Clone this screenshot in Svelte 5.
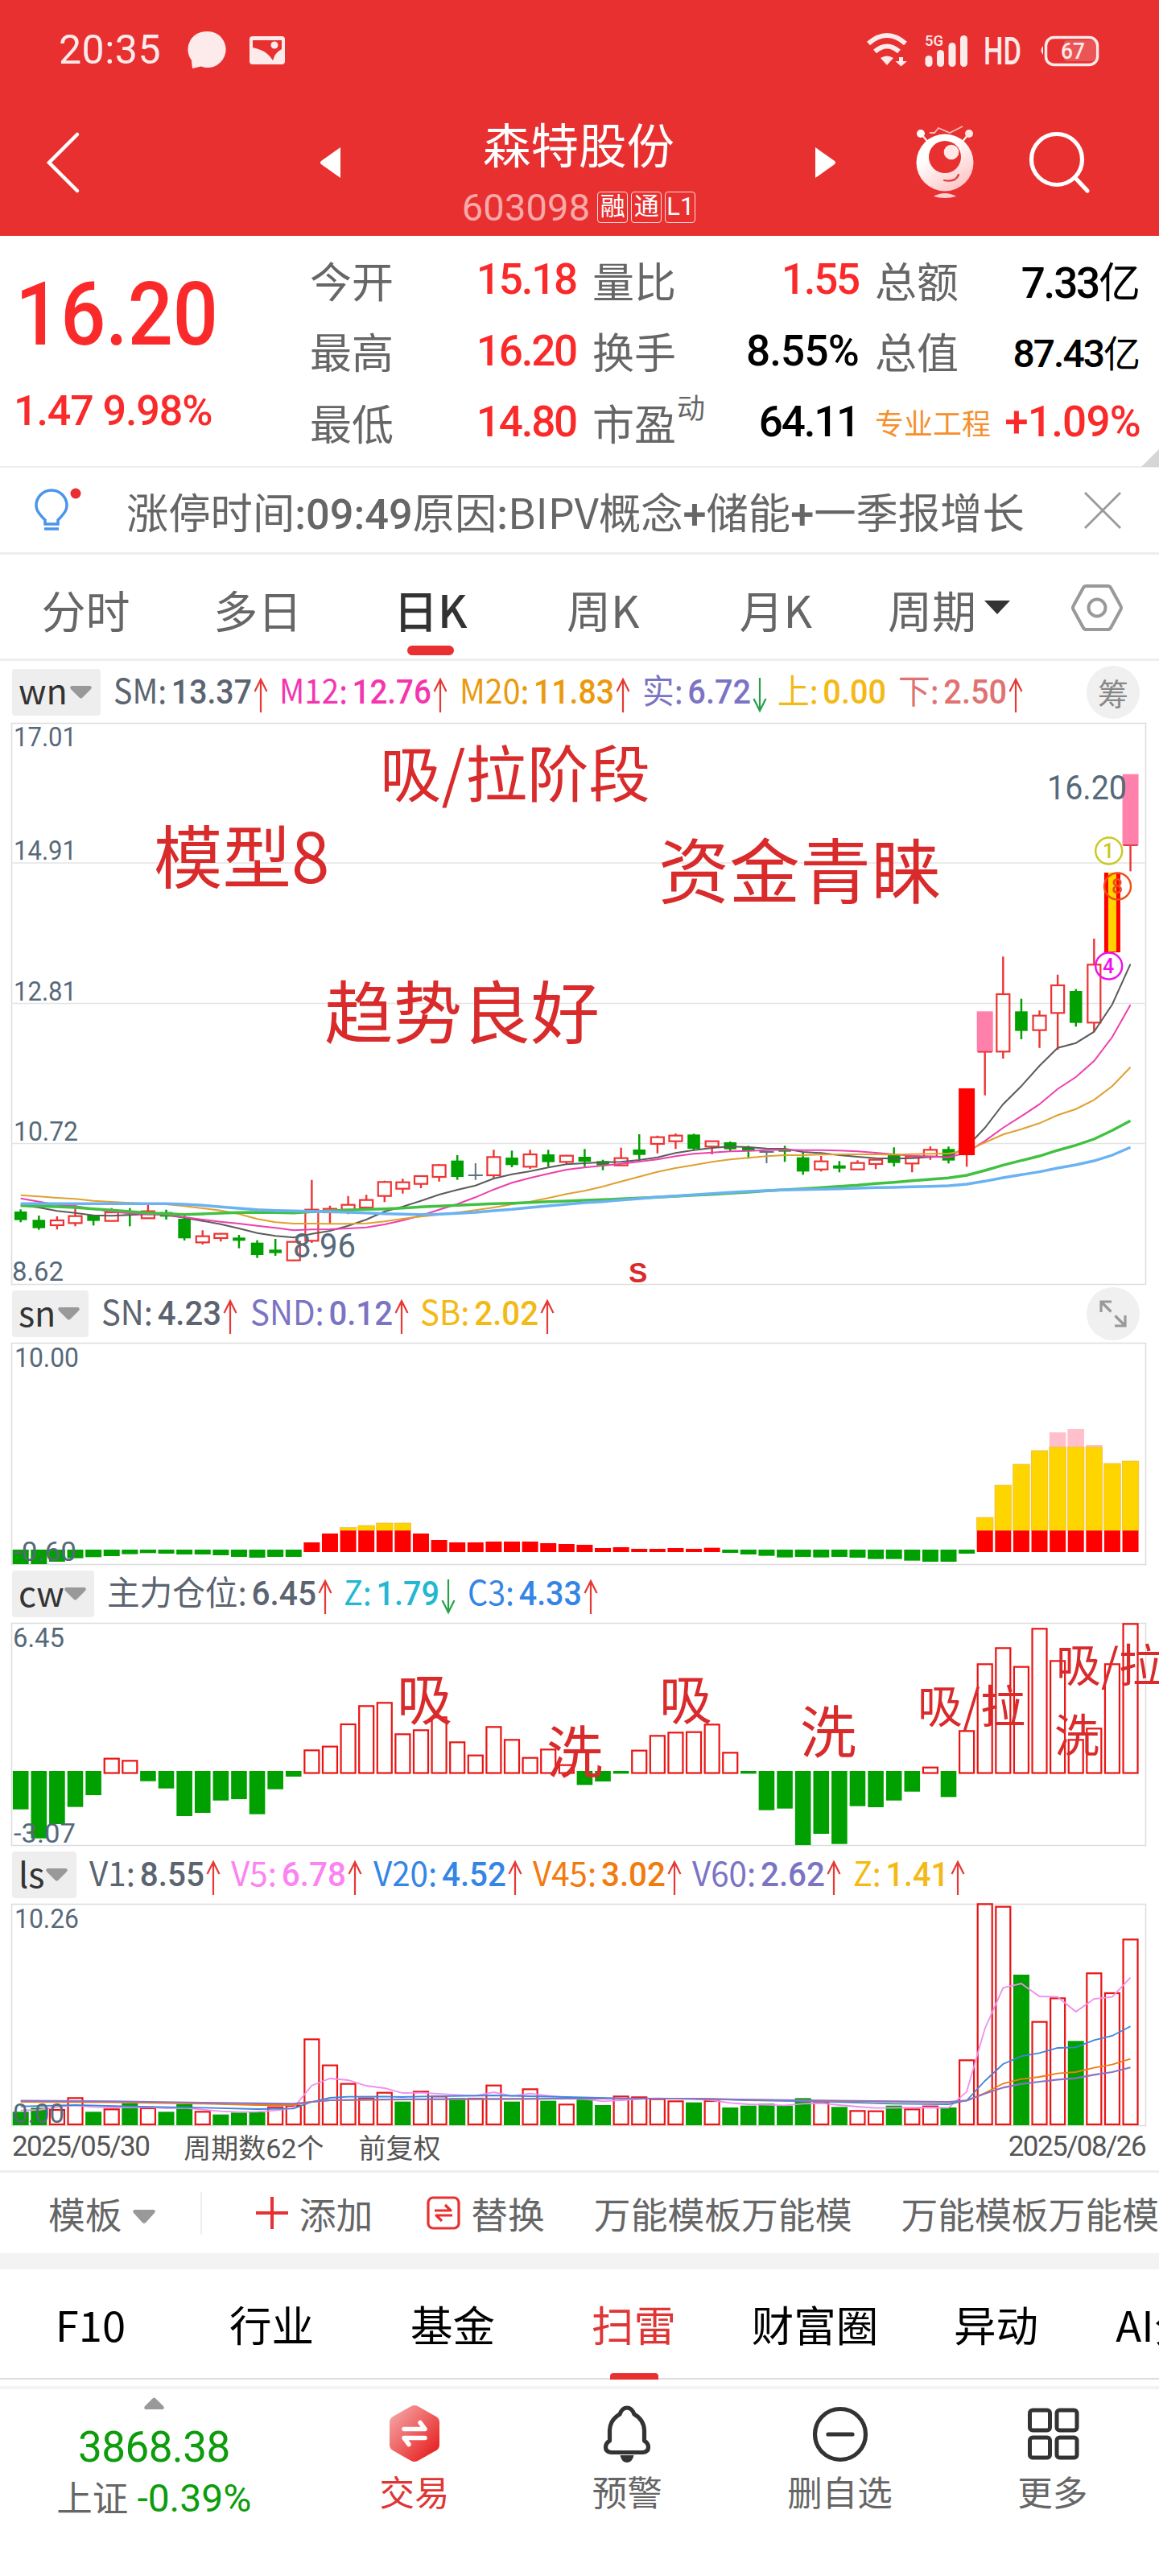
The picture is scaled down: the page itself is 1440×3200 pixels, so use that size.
<script>
  const quotes = [
    [
      { label: "今开", value: "15.18", tone: "up" },
      { label: "量比", value: "1.55", tone: "up" },
      { label: "总额", value: "7.33", unit: "亿" },
    ],
    [
      { label: "最高", value: "16.20", tone: "up" },
      { label: "换手", value: "8.55%" },
      { label: "总值", value: "87.43", unit: "亿", small: true },
    ],
    [
      { label: "最低", value: "14.80", tone: "up" },
      { label: "市盈", sup: "动", value: "64.11" },
      { label: "专业工程", value: "+1.09%", tone: "up", sector: true },
    ],
  ];

  const periods = ["分时", "多日", "日K", "周K", "月K", "周期"];

  const legends = {
    wn: [
      { k: "SM:", v: "13.37", c: "#5b6470", w: 206, t: 172, dir: "up" },
      { k: "M12:", v: "12.76", c: "#f535ae", w: 224, t: 189, dir: "up" },
      { k: "M20:", v: "11.83", c: "#ea9a0c", w: 227, t: 192, dir: "up" },
      { k: "实:", v: "6.72", c: "#7b74c4", w: 168, t: 135, dir: "down" },
      { k: "上:", v: "0.00", c: "#f3b915", w: 150, t: 135 },
      { k: "下:", v: "2.50", c: "#e07272", w: 170, t: 135, dir: "up" },
    ],
    sn: [
      { k: "SN:", v: "4.23", c: "#5b6470", w: 185, t: 149, dir: "up" },
      { k: "SND:", v: "0.12", c: "#7b74c4", w: 211, t: 177, dir: "up" },
      { k: "SB:", v: "2.02", c: "#f3b915", w: 170, t: 147, dir: "up" },
    ],
    cw: [
      { k: "主力仓位:", v: "6.45", c: "#5b6470", w: 294, t: 260, dir: "up" },
      { k: "Z:", v: "1.79", c: "#22b8d4", w: 154, t: 119, dir: "down" },
      { k: "C3:", v: "4.33", c: "#3585e6", w: 170, t: 142, dir: "up" },
    ],
    ls: [
      { k: "V1:", v: "8.55", c: "#5b6470", w: 176, t: 143, dir: "up" },
      { k: "V5:", v: "6.78", c: "#fb83f2", w: 177, t: 143, dir: "up" },
      { k: "V20:", v: "4.52", c: "#3585e6", w: 198, t: 165, dir: "up" },
      { k: "V45:", v: "3.02", c: "#f27a0e", w: 198, t: 165, dir: "up" },
      { k: "V60:", v: "2.62", c: "#7b74c4", w: 200, t: 165, dir: "up" },
      { k: "Z:", v: "1.41", c: "#f3b915", w: 140, t: 119, dir: "up" },
    ],
  };

  const x = (i) => 25.7 + i * 22.604;
  const yK = (v) => 282 + v / 3;
  const ySn = (v) => v / 3 - 68;
  const yCw = (v) => v / 3 - 76;
  const yLs = (v) => v / 3 - 75;

  // kind, high, body top, body bottom, low
  const candles = [
    ["g", 967, 975, 1007, 1015], ["g", 990, 1006, 1037, 1043], ["r", 993, 1008, 1026, 1042],
    ["r", 947, 992, 1018, 1030], ["g", 988, 988, 1010, 1027], ["r", 962, 978, 1010, 1010],
    ["g", 962, 986, 990, 1030], ["r", 942, 974, 1000, 1000], ["g", 968, 977, 994, 1005],
    ["g", 990, 1002, 1075, 1083], ["r", 1045, 1067, 1090, 1098], ["r", 1055, 1058, 1074, 1087],
    ["g", 1062, 1072, 1084, 1112], ["g", 1082, 1091, 1137, 1148], ["g", 1077, 1117, 1130, 1140],
    ["r", 1088, 1088, 1157, 1160], ["r", 857, 968, 1084, 1092], ["r", 953, 965, 978, 1020],
    ["r", 917, 950, 968, 985], ["r", 913, 932, 960, 962], ["r", 860, 865, 917, 940],
    ["r", 853, 866, 890, 908], ["r", 842, 843, 872, 888], ["r", 798, 802, 846, 863],
    ["g", 765, 785, 846, 857], ["d", 795, 837, 841, 857], ["r", 745, 772, 840, 852],
    ["g", 748, 774, 802, 810], ["r", 745, 762, 808, 816], ["g", 745, 762, 791, 808],
    ["r", 764, 767, 790, 798], ["g", 742, 771, 789, 808], ["g", 782, 787, 803, 821],
    ["r", 737, 776, 803, 803], ["g", 687, 744, 764, 780], ["r", 692, 698, 723, 758],
    ["r", 684, 692, 713, 742], ["g", 685, 688, 741, 745], ["r", 712, 713, 733, 762],
    ["g", 714, 717, 743, 752], ["g", 730, 735, 747, 778], ["d", 750, 750, 754, 795],
    ["g", 730, 742, 752, 790], ["g", 755, 773, 826, 838], ["r", 768, 788, 818, 826],
    ["g", 787, 803, 815, 829], ["r", 784, 794, 818, 818], ["r", 780, 782, 798, 817],
    ["g", 736, 765, 794, 807], ["r", 768, 770, 796, 829], ["r", 732, 745, 770, 782],
    ["g", 733, 742, 785, 796], ["solid", 516, 516, 765, 808], ["pink", 229, 229, 380, 542],
    ["r", 25, 165, 379, 405], ["g", 182, 229, 302, 333], ["r", 226, 245, 299, 365],
    ["r", 92, 132, 235, 372], ["g", 146, 153, 272, 286], ["r", -42, 55, 271, 304],
    ["gold", -288, -288, 9, 9], ["pink", -655, -655, -390, -293],
  ];

  const averages = [
    {
      color: "#5c5c5c", width: 2,
      points: [952, 960, 973, 980, 989, 991, 988, 985, 988, 998, 1010, 1022, 1038, 1055, 1066, 1072, 1058, 1047, 1028, 1005, 975, 957, 935, 912, 894, 878, 852, 836, 825, 811, 799, 795, 791, 790, 783, 773, 757, 746, 738, 733, 735, 740, 741, 753, 757, 765, 771, 776, 778, 776, 772, 770, 735, 663, 575, 508, 432, 365, 347, 305, 203, 53],
    },
    {
      color: "#ee3fae", width: 2,
      points: [926, 938, 950, 955, 965, 976, 982, 985, 987, 996, 1005, 1013, 1020, 1028, 1036, 1045, 1042, 1041, 1038, 1034, 1023, 1008, 990, 968, 947, 922, 893, 868, 850, 834, 819, 811, 804, 797, 789, 781, 769, 760, 755, 751, 749, 746, 745, 746, 746, 748, 751, 756, 762, 767, 770, 773, 755, 712, 663, 620, 575, 518, 474, 414, 325, 205],
    },
    {
      color: "#e0a030", width: 2,
      points: [914, 919, 924, 928, 935, 939, 943, 946, 948, 955, 963, 971, 984, 1003, 1015, 1020, 1020, 1021, 1021, 1019, 1012, 1002, 994, 987, 979, 970, 960, 948, 938, 925, 910, 898, 882, 863, 845, 827, 813, 802, 790, 781, 775, 769, 765, 765, 763, 762, 762, 762, 763, 761, 760, 759, 748, 718, 688, 668, 646, 616, 593, 559, 508, 437],
    },
    {
      color: "#41c141", width: 3.4,
      points: [953, 955, 957, 960, 965, 970, 975, 980, 983, 986, 984, 981, 979, 978, 979, 980, 976, 973, 970, 967, 965, 962, 958, 955, 952, 949, 946, 944, 941, 938, 936, 933, 931, 928, 925, 922, 918, 914, 911, 907, 903, 898, 894, 890, 886, 881, 877, 871, 866, 860, 855, 850, 840, 822, 802, 785, 768, 747, 728, 705, 673, 637],
    },
    {
      color: "#6ab2f2", width: 3.4,
      points: [946, 946, 946, 946, 946, 946, 946, 946, 946, 948, 952, 958, 963, 968, 971, 973, 974, 976, 978, 980, 983, 985, 986, 985, 982, 978, 972, 967, 960, 954, 948, 942, 938, 932, 927, 921, 917, 913, 908, 904, 900, 897, 894, 893, 892, 890, 888, 886, 885, 883, 881, 879, 873, 862, 849, 838, 827, 813, 801, 786, 765, 736],
    },
  ];

  const snBars = [1029, 1029, 1020, 1007, 1003, 999, 992, 988, 990, 993, 993, 996, 1002, 1005, 1002, 1002, 948, 915, 893, 885, 876, 876, 915, 939, 948, 948, 945, 945, 945, 951, 954, 957, 969, 966, 972, 972, 969, 972, 968, 987, 993, 998, 1004, 1002, 1004, 1002, 1005, 1010, 1010, 1016, 1020, 1020, 990, 855, 735, 657, 606, 538, 525, 585, 654, 645];

  const cwBars = [923, 1031, 978, 914, 870, 731, 739, 818, 845, 948, 936, 890, 885, 941, 848, 801, 700, 686, 603, 535, 523, 640, 625, 577, 670, 719, 613, 661, 728, 697, 755, 832, 819, 790, 701, 646, 634, 632, 604, 709, 790, 926, 920, 1056, 1014, 1052, 911, 915, 890, 857, 764, 877, 628, 379, 319, 389, 247, 367, 661, 619, 379, 229];

  const lsBars = [1000, 985, 990, 946, 1000, 988, 968, 984, 1000, 972, 997, 1010, 1003, 1002, 980, 975, 727, 824, 893, 947, 926, 962, 922, 940, 949, 948, 899, 962, 913, 959, 970, 955, 975, 940, 943, 950, 958, 965, 957, 984, 977, 970, 977, 949, 964, 982, 994, 995, 977, 988, 977, 984, 805, 223, 233, 489, 662, 574, 736, 481, 555, 355];
  const lsGreen = new Set([0, 1, 4, 6, 8, 9, 11, 12, 13, 21, 24, 27, 29, 31, 32, 37, 39, 40, 41, 42, 43, 45, 48, 51, 55, 58]);

  const lsLines = [
    {
      color: "#ef8fee", width: 1.8,
      points: [[0, 995], [1, 993], [2, 982], [3, 976], [4, 982], [5, 984], [7, 983], [8, 987], [9, 986], [10, 992], [11, 998], [12, 1001], [13, 1000], [14, 995], [15, 985], [16, 902], [17, 876], [18, 882], [19, 903], [20, 912], [21, 930], [22, 929], [24, 937], [25, 940], [26, 927], [27, 941], [28, 932], [29, 940], [30, 947], [31, 953], [32, 961], [33, 957], [34, 953], [35, 950], [37, 953], [38, 957], [39, 967], [40, 972], [42, 976], [43, 970], [44, 968], [45, 975], [46, 981], [47, 986], [50, 984], [51, 985], [52, 925], [53, 690], [54, 538], [55, 522], [56, 570], [57, 572], [58, 627], [59, 579], [60, 572], [61, 500]],
    },
    {
      color: "#3d86dd", width: 1.8,
      points: [[0, 980], [3, 975], [6, 980], [10, 985], [13, 990], [15, 988], [16, 963], [17, 948], [18, 944], [20, 943], [21, 945], [22, 943], [26, 939], [28, 942], [30, 945], [33, 950], [36, 951], [38, 953], [40, 957], [44, 962], [48, 970], [51, 972], [52, 958], [53, 885], [54, 822], [55, 793], [56, 781], [57, 762], [58, 760], [59, 733], [60, 717], [61, 682]],
    },
    {
      color: "#ef7d12", width: 1.8,
      points: [[0, 963], [5, 965], [10, 970], [13, 975], [15, 975], [16, 963], [17, 957], [20, 955], [30, 951], [37, 951], [40, 955], [45, 960], [51, 965], [52, 958], [53, 930], [54, 895], [55, 878], [56, 870], [57, 857], [58, 852], [59, 836], [60, 824], [61, 803]],
    },
    {
      color: "#8a74c4", width: 2.2,
      points: [[0, 959], [5, 961], [10, 966], [15, 970], [16, 963], [17, 957], [20, 954], [30, 951], [37, 951], [40, 955], [51, 963], [52, 958], [53, 932], [54, 910], [55, 896], [56, 888], [57, 880], [58, 875], [59, 862], [60, 852], [61, 835]],
    },
  ];

  const linePoints = (points, y) => points.map((v, i) => `${x(i).toFixed(1)},${y(v).toFixed(1)}`).join(" ");
  const pairPoints = (points, y) => points.map(([i, v]) => `${x(i).toFixed(1)},${y(v).toFixed(1)}`).join(" ");

  const infoTabs = ["F10", "行业", "基金", "扫雷", "财富圈", "异动", "AI分析"];
</script>

{#snippet legend(name, badgeWidth)}
  <div class="legend">
    <span class="badge" style:width="{badgeWidth}px">
      <span>{name}</span><svg width="27" height="16" viewBox="0 0 27 16"><path d="M2 0h23q3 1 1 4L16 14q-2.500 3-5 0L1 4q-2-3 1-4z" fill="#999" /></svg>
    </span>
    <div class="items">
      {#each legends[name] as item}
        <svg class="item" style:width="{item.w}px" height="60" viewBox="0 0 {item.w} 60">
          <text x="0" y="44" fill={item.c} textLength={item.t} lengthAdjust="spacingAndGlyphs">{item.k}<tspan class="reading" dx="6">{item.v}</tspan></text>
          {#if item.dir === "up"}
            <path d="M{item.t + 11} 55V14m-7.500 15l7.500-15l7.500 15" stroke="#e53935" stroke-width="2.200" fill="none" />
          {:else if item.dir === "down"}
            <path d="M{item.t + 11} 12V53m-7.500-15l7.500 15l7.500-15" stroke="#27a04a" stroke-width="2.200" fill="none" />
          {/if}
        </svg>
      {/each}
    </div>
    {#if name === "wn"}
      <span class="round">筹</span>
    {:else if name === "sn"}
      <span class="round">
        <svg width="34" height="34" viewBox="0 0 34 34" fill="none" stroke="#999" stroke-width="3.200">
          <path d="M2 15V2h13M2.500 2.500l12 12M32 19v13H19M31.500 31.500l-12-12" />
        </svg>
      </span>
    {/if}
  </div>
{/snippet}

{#snippet frame(height)}
  <rect x="14.500" y="0.500" width="1409" height={height - 1} fill="none" stroke="#dcdcdc" stroke-width="1.500" />
{/snippet}

{#snippet axis(text, tx, ty, width)}
  <text class="axis" x={tx} y={ty} textLength={width} lengthAdjust="spacingAndGlyphs">{text}</text>
{/snippet}

<div class="screen">
  <header>
    <div class="status">
      <span class="clock">20:35</span>
      <svg class="msg" width="46" height="46" viewBox="0 0 46 46"><path d="M23 0a22.500 22.500 0 1 1-8 43.500L4 46q-1-8-1-10A22.500 22.500 0 0 1 23 0z" fill="#fdeaea" /></svg>
      <svg class="pic" width="44" height="35" viewBox="0 0 44 35">
        <rect width="44" height="35" rx="4" fill="#fdeaea" />
        <path d="M4 5h36v11q-7 4-9 9l-2 5q-3-5-8-9T4 14z" fill="#e83030" />
        <circle cx="31" cy="11" r="4.500" fill="#fdeaea" />
      </svg>
      <svg class="signals" width="300" height="44" viewBox="0 0 300 44" fill="#fdeaea">
        <g fill="none" stroke="#fdeaea" stroke-width="6">
          <path d="M3 15Q26-5 49 15" />
          <path d="M11 25q15-13 30 0" />
        </g>
        <path d="M18 33q8-5 16 0l-8 9zM41 32h5v5h5l-7.500 6.500L36.500 37H41z" />
        <text x="73" y="18" font-size="19" textLength="23" lengthAdjust="spacingAndGlyphs" font-weight="500">5G</text>
        <rect x="73.500" y="30" width="9" height="14" rx="4.500" />
        <rect x="88" y="23" width="9" height="21" rx="4.500" />
        <rect x="102.500" y="14" width="9" height="30" rx="4.500" />
        <rect x="117" y="5" width="9" height="39" rx="4.500" />
        <text x="146" y="41" font-size="48" textLength="47" lengthAdjust="spacingAndGlyphs" font-weight="500">HD</text>
        <path d="M220 18q-5 6 0 11z" />
        <rect x="246" y="11" width="39" height="26" rx="4" opacity="0.200" />
        <rect x="223.500" y="7.500" width="64" height="34" rx="10" fill="none" stroke="#fdeaea" stroke-width="3.500" />
        <text x="242" y="34" font-size="28" textLength="30" lengthAdjust="spacingAndGlyphs" font-weight="500">67</text>
      </svg>
    </div>
    <div class="nav">
      <svg class="back" width="44" height="76" viewBox="0 0 44 76"><path d="M40 3L5 38l35 35" fill="none" stroke="#fff" stroke-width="4.500" stroke-linecap="round" /></svg>
      <svg class="prev" width="25" height="38" viewBox="0 0 25 38"><path d="M25 0v38L1 21q-2-2 0-4z" fill="#fff" /></svg>
      <div class="stock">
        <h1>森特股份</h1>
        <p><span class="code">603098</span><i>融</i><i>通</i><i>L1</i></p>
      </div>
      <svg class="next" width="25" height="38" viewBox="0 0 25 38"><path d="M0 0v38l24-17q2-2 0-4z" fill="#fff" /></svg>
      <svg class="mascot" width="74" height="92" viewBox="0 0 74 92">
        <defs>
          <linearGradient id="body" x1="0.200" y1="0" x2="0.800" y2="1">
            <stop offset="0.300" stop-color="#fff" />
            <stop offset="1" stop-color="#ffc0c0" />
          </linearGradient>
        </defs>
        <path d="M8 11l10 12M66 11L57 22" stroke="#fff" stroke-width="2" />
        <path d="M18 9h6l5-6 14 6L59 1" fill="none" stroke="#fbb" stroke-width="1.800" />
        <circle cx="7" cy="10" r="5" fill="#fff" />
        <circle cx="67" cy="10" r="5" fill="#ffe6e6" />
        <circle cx="37" cy="46" r="35.500" fill="url(#body)" />
        <circle cx="37" cy="39" r="20" fill="#e83030" />
        <circle cx="45" cy="33" r="9.300" fill="#ffe8e8" />
        <path d="M36 68q14 3 18-7" fill="none" stroke="#e03a3a" stroke-width="2.200" stroke-linecap="round" />
        <path d="M23 88q14-8 28 0-14 4-28 0z" fill="#ffd0d0" />
      </svg>
      <svg class="search" width="78" height="78" viewBox="0 0 78 78" fill="none" stroke="#fff" stroke-width="5.200" stroke-linecap="round">
        <circle cx="35" cy="36" r="31.500" />
        <path d="M58 59l15 16" />
      </svg>
    </div>
  </header>

  <section class="quote">
    <div class="price">
      <svg width="250" height="90" viewBox="0 0 250 90"><text x="-3" y="85" textLength="252" lengthAdjust="spacingAndGlyphs">16.20</text></svg>
      <span>1.47 9.98%</span>
    </div>
    <div class="grid">
      {#each quotes as row}
        {#each row as cell}
          <div class="cell" class:sector={cell.sector}>
            <span class="label">{cell.label}{#if cell.sup}<sup>{cell.sup}</sup>{/if}</span>
            <span class="value {cell.tone ?? ''}" class:percent={cell.value.includes("%")} class:small={cell.small}>{cell.value}{#if cell.unit}<em>{cell.unit}</em>{/if}</span>
          </div>
        {/each}
      {/each}
    </div>
    <svg class="corner" width="22" height="22" viewBox="0 0 22 22"><path d="M22 0v22H0z" fill="#d6d6d6" /></svg>
  </section>

  <section class="notice">
    <svg width="60" height="64" viewBox="0 0 60 64" fill="none" stroke="#4a94ea" stroke-width="3.500">
      <path d="M13 43C3 33 2 29 2 25a19 19 0 0 1 38 0c0 4-1 8-11 18v5H13z" />
      <path d="M12 54h18" />
      <circle cx="51" cy="10" r="6.500" fill="#e83030" stroke="none" />
    </svg>
    <p>涨停时间<b>:09:49</b>原因<b>:</b>BIPV概念<b>+</b>储能<b>+</b>一季报增长</p>
    <svg class="close" width="46" height="46" viewBox="0 0 46 46"><path d="M1 1l44 44M45 1L1 45" stroke="#999" stroke-width="2.800" /></svg>
  </section>

  <nav class="periods">
    {#each periods as period}
      <span class:active={period === "日K"}>
        {period}{#if period === "周期"}<svg width="32" height="17" viewBox="0 0 32 17"><path d="M0 0h32L16 17z" fill="#333" /></svg>{/if}
      </span>
    {/each}
    <svg class="gear" width="64" height="58" viewBox="0 0 64 58" fill="none" stroke="#999" stroke-width="4">
      <path d="M19 2h26q3 0 4 2l12 22q2 3 0 6L49 54q-1 2-4 2H19q-3 0-4-2L3 32q-2-3 0-6L15 4q1-2 4-2z" />
      <circle cx="32" cy="29" r="10.500" />
    </svg>
  </nav>

  {@render legend("wn", 110)}
  <svg class="chart" width="1440" height="698" viewBox="0 0 1440 698">
    {@render frame(698)}
    {#each [174, 348.5, 522.5] as gy}
      <line x1="14" x2="1424" y1={gy} y2={gy} stroke="#e4e4e4" stroke-width="1.500" />
    {/each}
    {#each candles as [kind, high, top, bottom, low], i}
      {@const cx = x(i)}
      {@const h = yK(bottom) - yK(top)}
      {#if kind === "g"}
        <path d="M{cx} {yK(high)}V{yK(low)}" stroke="#00a000" stroke-width="2.500" />
        <rect x={cx - 7.8} y={yK(top)} width="15.600" height={h} fill="#00a000" />
      {:else if kind === "d"}
        <path d="M{cx} {yK(high)}V{yK(low)}M{cx - 9} {yK(top) + 1}h18" stroke="#5d7180" stroke-width="2" />
      {:else if kind === "r"}
        <path d="M{cx} {yK(high)}V{yK(top)}M{cx} {yK(bottom)}V{yK(low)}" stroke="#ee3333" stroke-width="2.400" />
        <rect x={cx - 8} y={yK(top)} width="16" height={h} fill="none" stroke="#ee3333" stroke-width="2.200" />
      {/if}
    {/each}
    {#each averages as line}
      <polyline points={linePoints(line.points, yK)} fill="none" stroke={line.color} stroke-width={line.width} />
    {/each}
    {#each candles as [kind, high, top, bottom, low], i}
      {@const cx = x(i)}
      {@const h = yK(bottom) - yK(top)}
      {#if kind === "solid" || kind === "pink" || kind === "gold"}
        <path d="M{cx} {yK(bottom)}V{yK(low)}" stroke="#ee3333" stroke-width="2.400" />
        <rect x={cx - 10} y={yK(top)} width="20" height={h} fill={kind === "pink" ? "#ff80aa" : "#ff0000"} />
        {#if kind === "gold"}
          <rect x={cx - 5} y={yK(top)} width="10" height={h - 1} fill="#ffd400" />
        {:else if kind === "pink"}
          <path d="M{cx - 9} {yK(bottom)}h18" stroke="#e83a4a" stroke-width="2" />
        {/if}
      {/if}
    {/each}
    {@render axis("17.01", 17, 29, 78)}
    {@render axis("14.91", 17, 170, 78)}
    {@render axis("12.81", 17, 345, 78)}
    {@render axis("10.72", 17, 519, 80)}
    {@render axis("8.62", 15, 693, 64)}
    <text class="mark" x="364" y="664" textLength="78" lengthAdjust="spacingAndGlyphs">8.96</text>
    <text class="mark" x="1301" y="95" textLength="99" lengthAdjust="spacingAndGlyphs">16.20</text>
    <g class="note">
      <text x="472" y="92" font-size="76.500">吸/拉阶段</text>
      <text x="191" y="199" font-size="85.500">模型8</text>
      <text x="818" y="217" font-size="88">资金青睐</text>
      <text x="403" y="392" font-size="85.500">趋势良好</text>
      <text class="sell" x="781" y="695" font-size="35">S</text>
    </g>
    <g class="pin">
      <circle cx="1377.700" cy="159" r="16.500" stroke="#c9c920" /><text x="1377" y="168" fill="#c9c920">1</text>
      <circle cx="1388.500" cy="203" r="16.500" stroke="#f04e12" /><text x="1388" y="212" fill="#f04e12">8</text>
      <circle cx="1377.700" cy="302" r="16.500" stroke="#ee10ee" /><text x="1377" y="311" fill="#ee10ee">4</text>
    </g>
  </svg>

  {@render legend("sn", 95)}
  <svg class="chart" width="1440" height="276" viewBox="0 0 1440 276">
    {@render frame(276)}
    {#each snBars as v, i}
      {#if v > 975}
        <rect x={x(i) - 10} y="257" width="20" height={ySn(v) - 257} fill="#00a000" />
      {:else}
        {#if v < 593}
          <rect x={x(i) - 10.3} y={ySn(v)} width="20.600" height={ySn(593) - ySn(v)} fill="#ffc0cb" />
        {/if}
        {#if v < 904}
          <rect x={x(i) - 10.3} y={ySn(Math.max(v, 593))} width="20.600" height={ySn(904) - ySn(Math.max(v, 593))} fill="#ffd500" stroke="#e8b040" stroke-width="0.600" />
        {/if}
        <rect x={x(i) - 10} y={ySn(Math.max(v, 904))} width="20" height={260 - ySn(Math.max(v, 904))} fill="#ff0000" />
      {/if}
    {/each}
    {@render axis("10.00", 18, 30, 80)}
    {@render axis("-0.60", 17, 271, 78)}
  </svg>

  {@render legend("cw", 102)}
  <svg class="chart" width="1440" height="277" viewBox="0 0 1440 277">
    {@render frame(277)}
    {#each cwBars as v, i}
      {#if v > 785}
        <rect x={x(i) - 9.8} y="184" width="19.600" height={yCw(v) - 184} fill="#00a000" />
      {:else}
        <rect x={x(i) - 9} y={yCw(v) + 1} width="18" height={185.5 - yCw(v)} fill="none" stroke="#ea1414" stroke-width="2.200" />
      {/if}
    {/each}
    {@render axis("6.45", 16, 30, 64)}
    {@render axis("-3.07", 17, 273, 77)}
    <g class="note">
      <text x="493" y="121" font-size="69">吸</text>
      <text x="679" y="187" font-size="70">洗</text>
      <text x="819" y="120" font-size="66">吸</text>
      <text x="994" y="162" font-size="70">洗</text>
      <text x="1140" y="124" font-size="56">吸/拉</text>
      <text x="1312" y="73" font-size="56">吸/拉</text>
      <text x="1310" y="160" font-size="56">洗</text>
    </g>
  </svg>

  {@render legend("ls", 80)}
  <svg class="chart" width="1440" height="276" viewBox="0 0 1440 276">
    {@render frame(276)}
    {#each lsBars as v, i}
      {#if lsGreen.has(i)}
        <rect x={x(i) - 10} y={yLs(v)} width="20" height={275 - yLs(v)} fill="#00a000" />
      {:else}
        <rect x={x(i) - 9} y={yLs(v) + 1} width="18" height={273 - yLs(v)} fill="none" stroke="#ea1414" stroke-width="2.200" />
      {/if}
    {/each}
    {#each lsLines as line}
      <polyline points={pairPoints(line.points, yLs)} fill="none" stroke={line.color} stroke-width={line.width} />
    {/each}
    {@render axis("10.26", 18, 30, 80)}
    {@render axis("0.00", 16, 272, 64)}
  </svg>

  <div class="dates">
    <span class="num">2025/05/30</span>
    <span class="cycles">周期数62个</span>
    <span>前复权</span>
    <span class="num last">2025/08/26</span>
  </div>

  <div class="toolbar">
    <span class="template">模板<svg width="28" height="18" viewBox="0 0 28 18"><path d="M2 0h24q3 1 1 4L17 15q-3 4-6 0L1 4q-2-3 1-4z" fill="#999" /></svg></span>
    <span class="tool add">
      <svg width="40" height="40" viewBox="0 0 40 40"><path d="M20 0v40M0 20h40" stroke="#e83030" stroke-width="4" /></svg>添加
    </span>
    <span class="tool swap">
      <svg width="42" height="42" viewBox="0 0 42 42" fill="none" stroke="#e83030" stroke-width="3.200">
        <rect x="2" y="2" width="38" height="38" rx="6" />
        <path d="M10 18h20l-7-7M32 24H12l7 7" stroke-linejoin="round" />
      </svg>替换
    </span>
    <span class="tpl">万能模板万能模</span>
    <span class="tpl">万能模板万能模</span>
  </div>
  <div class="band"></div>

  <nav class="info">
    {#each infoTabs as tab}
      <span class:active={tab === "扫雷"}>{tab}</span>
    {/each}
  </nav>

  <footer>
    <div class="index">
      <svg width="25" height="15" viewBox="0 0 25 15"><path d="M2 15h21q3-1 1-4L15 2q-2.500-3-5 0L1 11q-2 3 1 4z" fill="#999" /></svg>
      <strong>3868.38</strong>
      <span>上证 <b>-0.39%</b></span>
    </div>
    <div class="action trade">
      <svg width="74" height="74" viewBox="0 0 74 74">
        <defs>
          <linearGradient id="hex" x1="0.100" y1="0.100" x2="0.850" y2="0.850">
            <stop offset="0" stop-color="#f5a0a0" />
            <stop offset="1" stop-color="#e82828" />
          </linearGradient>
        </defs>
        <path d="M33 3q4-2 8 0l23 13q4 2.500 4 7v28q0 4.500-4 7L41 71q-4 2-8 0L10 58q-4-2.500-4-7V23q0-4.500 4-7z" fill="url(#hex)" />
        <path d="M24 31.500h26l-6-8M50 42.500H24l6 8" fill="none" stroke="#fff" stroke-width="5.500" stroke-linecap="round" stroke-linejoin="round" />
      </svg>
      <span>交易</span>
    </div>
    <div class="action">
      <svg width="74" height="74" viewBox="0 0 74 74">
        <path d="M28 13q3-8 9-8t9 8q12 7 12.500 20v13q5 3 5 8 0 6-7 6.500h-39q-7-.5-7-6.500 0-5 5-8V33Q16 20 28 13z" fill="none" stroke="#333" stroke-width="5.200" stroke-linejoin="round" />
        <path d="M28.500 64h17q-2 9-8.500 9t-8.500-9z" fill="#333" />
      </svg>
      <span>预警</span>
    </div>
    <div class="action">
      <svg width="74" height="74" viewBox="0 0 74 74" fill="none" stroke="#333" stroke-width="5.200" stroke-linecap="round">
        <circle cx="37" cy="38" r="31.500" />
        <path d="M22 38h30" />
      </svg>
      <span>删自选</span>
    </div>
    <div class="action">
      <svg width="74" height="74" viewBox="0 0 74 74" fill="none" stroke="#333" stroke-width="5">
        <rect x="8.500" y="8" width="25" height="25" rx="3.500" />
        <rect x="42" y="8" width="25" height="25" rx="3.500" />
        <rect x="8.500" y="42" width="25" height="25" rx="3.500" />
        <rect x="42" y="42" width="25" height="25" rx="3.500" />
      </svg>
      <span>更多</span>
    </div>
  </footer>
</div>

<style>
  :global(body) {
    margin: 0;
    background: #fff;
  }

  .screen {
    width: 1440px;
    height: 3200px;
    overflow: hidden;
    background: #fff;
    color: #666;
    font-family: Roboto, "Noto Sans CJK SC", sans-serif;
    white-space: nowrap;
  }

  svg {
    display: block;
    flex-shrink: 0;
    overflow: visible;
  }

  header {
    height: 293px;
    background: #e83030;
    color: #fff;
  }

  .status {
    display: flex;
    align-items: center;
    height: 124px;
    padding-left: 73px;
  }

  .clock {
    width: 162px;
    font-size: 50px;
    letter-spacing: 0.5px;
    color: #fdeaea;
  }

  .pic {
    margin-left: 29px;
  }

  .signals {
    margin-left: 722px;
    margin-top: -3px;
  }

  .nav {
    display: flex;
    align-items: flex-start;
    height: 169px;
  }

  .back {
    margin: 40px 0 0 56px;
  }

  .prev {
    margin: 59px 0 0 298px;
  }

  .stock {
    display: flex;
    flex-direction: column;
    align-items: center;
    width: 592px;
  }

  h1 {
    margin: 19px 0 0;
    font-size: 59.5px;
    line-height: 80px;
    font-weight: 400;
  }

  .stock p {
    display: flex;
    align-items: center;
    gap: 4px;
    margin: 14px 0 0;
    height: 40px;
  }

  .code {
    margin-right: 5px;
    font-size: 47px;
    letter-spacing: 0.2px;
    color: #f9a9a9;
  }

  .stock i {
    box-sizing: border-box;
    width: 38px;
    height: 39px;
    border: 1.5px solid #fbdada;
    border-radius: 4px;
    font-size: 31px;
    line-height: 36px;
    font-style: normal;
    text-align: center;
  }

  .next {
    margin: 59px 0 0 -2px;
  }

  .mascot {
    margin: 32px 0 0 99px;
  }

  .search {
    margin: 38px 0 0 67px;
  }

  .quote {
    position: relative;
    box-sizing: border-box;
    display: flex;
    height: 288px;
    border-bottom: 2px solid #eee;
  }

  .price {
    width: 385px;
    padding-top: 50px;
    box-sizing: border-box;
    color: #fb2a2a;
  }

  .price svg {
    margin-left: 22px;
    font-size: 109px;
    font-weight: 500;
    fill: #fb2a2a;
  }

  .price span {
    display: block;
    margin: 48px 0 0 17px;
    font-size: 52px;
    line-height: 60px;
    letter-spacing: -1.1px;
    font-weight: 500;
  }

  .grid {
    display: grid;
    grid-template-columns: 331px 331px 330px;
    grid-auto-rows: 88.5px;
    column-gap: 20px;
    padding-top: 10px;
  }

  .cell {
    display: flex;
    justify-content: space-between;
    align-items: center;
    height: 88px;
  }

  .label {
    position: relative;
    font-size: 52px;
  }

  .label sup {
    position: absolute;
    left: 105px;
    top: 2px;
    font-size: 35px;
    line-height: 40px;
  }

  .value {
    font-size: 53px;
    font-weight: 500;
    letter-spacing: -2.2px;
    color: #000;
  }

  .value.percent {
    letter-spacing: -0.8px;
  }

  .value.small {
    font-size: 48px;
    letter-spacing: -2px;
  }

  .value em {
    font-style: normal;
    font-weight: 400;
    font-size: 52px;
    letter-spacing: 0;
  }

  .value.small em {
    font-size: 46px;
  }

  .value.up {
    color: #fb2a2a;
  }

  .sector .label {
    font-size: 36px;
    color: #f5902c;
  }

  .corner {
    position: absolute;
    right: 0;
    bottom: -1px;
  }

  .notice {
    box-sizing: border-box;
    display: flex;
    align-items: center;
    height: 108px;
    padding-left: 43px;
    border-bottom: 3px solid #eee;
  }

  .notice > svg:first-child {
    margin-top: 3px;
  }

  .notice p {
    width: 1190px;
    margin: 5px 0 0 54px;
    font-family: "Noto Sans CJK SC", sans-serif;
    font-size: 52.3px;
    line-height: 80px;
  }

  .notice b {
    font-family: Roboto, sans-serif;
    font-weight: 500;
  }

  .periods {
    box-sizing: border-box;
    display: flex;
    height: 132px;
    border-bottom: 3px solid #eee;
    font-family: "Noto Sans CJK SC", sans-serif;
    font-size: 55px;
    line-height: 80px;
  }

  .periods span {
    position: relative;
    box-sizing: border-box;
    display: flex;
    align-items: center;
    justify-content: center;
    width: 214.5px;
    padding-top: 4px;
  }

  .periods span:first-child {
    width: 213px;
  }

  .periods span svg {
    margin: -3px 0 0 10px;
  }

  .periods span:nth-child(6) {
    width: 216px;
  }

  .periods .active {
    color: #333;
    font-weight: 500;
  }

  .periods .active::after {
    content: "";
    position: absolute;
    bottom: 4px;
    width: 58px;
    height: 12px;
    border-radius: 6px;
    background: #e83030;
  }

  .gear {
    margin: 37px 0 0 44px;
  }

  .legend {
    display: flex;
    align-items: center;
    height: 72px;
    padding: 0 24px 0 15px;
  }

  .periods + .legend {
    height: 77px;
  }

  .badge {
    box-sizing: border-box;
    display: flex;
    align-items: center;
    justify-content: space-between;
    height: 58px;
    padding: 0 11px 0 8px;
    border-radius: 4px;
    background: #eee;
    color: #333;
    font-family: "Noto Sans CJK SC", sans-serif;
    font-size: 43px;
    line-height: 58px;
  }

  .badge span {
    margin-top: -7px;
  }

  .items {
    display: flex;
    flex: 1;
    margin-left: 16px;
    font-family: "Noto Sans CJK SC", sans-serif;
    font-size: 42px;
  }

  .reading {
    font-family: Roboto, sans-serif;
    font-weight: 500;
  }

  .round {
    display: flex;
    align-items: center;
    justify-content: center;
    width: 66px;
    height: 66px;
    border-radius: 50%;
    background: #f0f0f0;
    color: #888;
    font-size: 38px;
  }

  .axis {
    font-size: 34px;
    fill: #56697a;
  }

  .mark {
    font-size: 42px;
    fill: #56697a;
  }

  .note {
    fill: #d92b2b;
    font-family: "Noto Sans CJK SC", sans-serif;
  }

  .sell {
    font-family: "Liberation Sans", sans-serif;
    font-weight: 700;
  }

  .pin {
    fill: none;
    stroke-width: 2.4;
    font-size: 25px;
    font-weight: 500;
    text-anchor: middle;
  }

  .pin text {
    stroke: none;
  }

  .dates {
    box-sizing: border-box;
    display: flex;
    align-items: center;
    height: 58px;
    padding: 0 17px 5px 15px;
    border-bottom: 3px solid #eee;
    color: #555;
    font-size: 34px;
  }

  .num {
    font-size: 35px;
    letter-spacing: -1.6px;
  }

  .cycles {
    margin: 0 43px;
  }

  .last {
    margin-left: auto;
  }

  .toolbar {
    display: flex;
    align-items: center;
    height: 100px;
    font-size: 45.8px;
  }

  .template {
    box-sizing: border-box;
    display: flex;
    align-items: center;
    width: 257px;
    height: 53px;
    padding-left: 60px;
    border-right: 2px solid #eee;
  }

  .template svg {
    margin: 10px 0 0 13px;
  }

  .tool {
    display: flex;
    align-items: center;
  }

  .add {
    gap: 14px;
    margin-left: 67px;
  }

  .swap {
    gap: 13px;
    margin-left: 67px;
  }

  .tpl {
    margin-left: 61px;
  }

  .band {
    height: 20px;
    background: #f3f3f3;
  }

  .info {
    box-sizing: border-box;
    display: flex;
    height: 137px;
    border-bottom: 2px solid #ddd;
    color: #000;
    font-family: "Noto Sans CJK SC", sans-serif;
    font-size: 52.5px;
    line-height: 135px;
  }

  .info span {
    position: relative;
    display: flex;
    flex-shrink: 0;
    justify-content: center;
    width: 225px;
  }

  .info .active {
    color: #e03535;
  }

  .info .active::after {
    content: "";
    position: absolute;
    bottom: -2px;
    width: 60px;
    height: 8px;
    border-radius: 4px 4px 0 0;
    background: #e83030;
  }

  footer {
    display: flex;
    margin-top: 8px;
    border-top: 4px solid #f3f3f3;
  }

  .index {
    display: flex;
    flex-direction: column;
    align-items: center;
    width: 383px;
    padding-top: 10px;
    font-size: 44.5px;
  }

  .index strong {
    margin-top: 16px;
    font-size: 53px;
    line-height: 62px;
    font-weight: 400;
    color: #0c9c0c;
    letter-spacing: -0.6px;
  }

  .index span {
    line-height: 66px;
  }

  .index b {
    font-size: 48px;
    font-weight: 400;
    color: #0c9c0c;
  }

  .action {
    display: flex;
    flex-direction: column;
    align-items: center;
    width: 264.5px;
    padding-top: 18px;
  }

  .action span {
    font-size: 43.5px;
    line-height: 78px;
  }

  .trade span {
    color: #e03535;
  }
</style>
